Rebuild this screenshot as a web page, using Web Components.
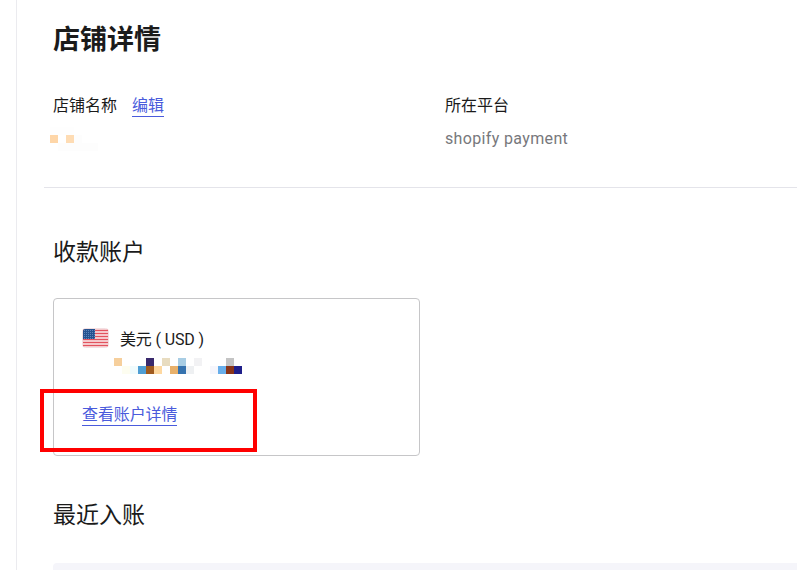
<!DOCTYPE html>
<html lang="zh">
<head>
<meta charset="utf-8">
<title>店铺详情</title>
<style>
  html, body { margin: 0; height: 570px; overflow: hidden; background: #fff; }
  body { font-family: Roboto, "Noto Sans CJK SC", sans-serif; color: #1b1b1b; }
</style>
</head>
<body>
<store-page>
  <info-field slot="fields" label="店铺名称" action="编辑" style="width:392px">
    <mosaic-block cells="0:0:#fed6a8 2:0:#fedcb4 0:-1:#fefefe 1:-1:#fefefe 2:-1:#fefefe 3:0:#fdfdfd 4:1:#fdfdfd 5:1:#fdfdfd 1:1:#fdfdfd 2:1:#fdfdfd 3:1:#fdfdfd" style="margin-left:-3px"></mosaic-block>
  </info-field>
  <info-field slot="fields" label="所在平台"><span style="color:#77787c;letter-spacing:.35px">shopify payment</span></info-field>
  <account-card slot="card" currency="美元 ( USD )" link="查看账户详情"></account-card>
</store-page>

<script>
class MosaicBlock extends HTMLElement {
    connectedCallback() {
        const root = this.attachShadow({ mode: "open" });
        const cells = (this.getAttribute("cells") || "").split(" ").map(c => c.split(":"));
        const minRow = Math.min(...cells.map(c => +c[1]));
        const html = cells.map(([x, y, color]) =>
            `<i style="grid-column:${+x + 1};grid-row:${+y - minRow + 1};background:${color}"></i>`).join("");
        root.innerHTML = `
      <style>
        :host { display: block; }
        div { display: grid; grid-auto-columns: 8px; grid-auto-rows: 8px; justify-content: start; }
      </style>
      <div>${html}</div>`;
    }
}

class InfoField extends HTMLElement {
    connectedCallback() {
        const root = this.attachShadow({ mode: "open" });
        const action = this.getAttribute("action");
        root.innerHTML = `
      <style>
        :host { display: block; font-size: 16px; }
        .label { display: flex; gap: 15px; height: 24px; line-height: 24px; }
        a { color: #4a5bdc; border-bottom: 1px solid #4a5bdc; height: 22px; line-height: 24px; }
        .value { margin-top: 9px; height: 24px; line-height: 24px; }
      </style>
      <div class="label"><span>${this.getAttribute("label")}</span>${action ? `<a>${action}</a>` : ""}</div>
      <div class="value"><slot></slot></div>`;
    }
}

class AccountCard extends HTMLElement {
    connectedCallback() {
        const root = this.attachShadow({ mode: "open" });
        root.innerHTML = `
      <style>
        :host { display: block; position: relative; width: 367px; height: 158px; box-sizing: border-box;
                border: 1px solid #c6c6c8; border-radius: 4px; padding: 28px 28px 0; font-size: 16px; }
        .cur { display: flex; align-items: center; gap: 11px; height: 22px; letter-spacing: -.15px; }
        svg { display: block; }
        mosaic-block { margin: 9px 0 0 32px; }
        a { display: inline-block; margin-top: 28px; color: #4a5bdc; border-bottom: 1px solid #4a5bdc;
            height: 23px; line-height: 25px; letter-spacing: -.1px; }
        .mark { position: absolute; left: -14px; top: 90px; width: 209px; height: 55px;
                border: 4px solid #f00; }
      </style>
      <div class="cur">
        <svg width="27" height="20" viewBox="0 0 27 20">
          <defs>
            <pattern id="stars" width="2" height="2" patternUnits="userSpaceOnUse">
              <rect width="1" height="1" fill="#5f86bb"/>
            </pattern>
          </defs>
          <rect x=".5" y=".5" width="26" height="19" rx="3" fill="#fbeff0" stroke="#f3dfe2"/>
          <path d="M1 2.5h25M1 5.5h25M1 8.5h25M1 11.5h25M1 14.5h25M1 17.5h25" stroke="#e2535e" stroke-width="1.4"/>
          <path d="M1 3a2 2 0 0 1 2-2h10v10H1z" fill="#26528f"/>
          <path d="M1 3a2 2 0 0 1 2-2h10v10H1z" fill="url(#stars)"/>
        </svg>
        <span>${this.getAttribute("currency")}</span>
      </div>
      <mosaic-block cells="0:0:#f6cf9c 4:0:#39296c 6:0:#e8dcc0 8:0:#a8cde4 10:0:#f2f2f4 14:0:#c4c4c4 1:1:#fdfdf0 2:1:#f0fbfd 3:1:#4f9ed4 4:1:#a05a1e 5:1:#fed8a0 7:1:#e8b06a 8:1:#3572ae 9:1:#eef0f2 12:1:#f6f6fc 13:1:#68aeea 14:1:#8a3418 15:1:#1f1f8a"></mosaic-block>
      <a>${this.getAttribute("link")}</a>
      <div class="mark"></div>`;
    }
}

class StorePage extends HTMLElement {
    connectedCallback() {
        const root = this.attachShadow({ mode: "open" });
        root.innerHTML = `
      <style>
        :host { display: block; margin-left: 16px; height: 570px; overflow: hidden; box-sizing: border-box;
                border-left: 1px solid #ebebef; padding: 19px 0 0 36px; }
        h1 { margin: 0; font-size: 27px; line-height: 42px; font-weight: 700; color: #1b1b1b; }
        .fields { display: flex; margin-top: 33px; }
        hr { margin: 36px 0 0 -9px; border: 0; border-top: 1px solid #e4e4ea; }
        h2 { margin: 0; font-size: 23px; line-height: 34px; font-weight: 400; }
        .account { margin-top: 48px; }
        .card { margin-top: 28px; }
        .recent { margin-top: 43px; }
        .table { margin-top: 30px; height: 40px; background: #f5f5fa; border-radius: 4px 0 0 0; }
      </style>
      <h1>店铺详情</h1>
      <div class="fields"><slot name="fields"></slot></div>
      <hr>
      <h2 class="account">收款账户</h2>
      <div class="card"><slot name="card"></slot></div>
      <h2 class="recent">最近入账</h2>
      <div class="table"></div>`;
    }
}

customElements.define("mosaic-block", MosaicBlock);
customElements.define("info-field", InfoField);
customElements.define("account-card", AccountCard);
customElements.define("store-page", StorePage);
</script>
</body>
</html>
